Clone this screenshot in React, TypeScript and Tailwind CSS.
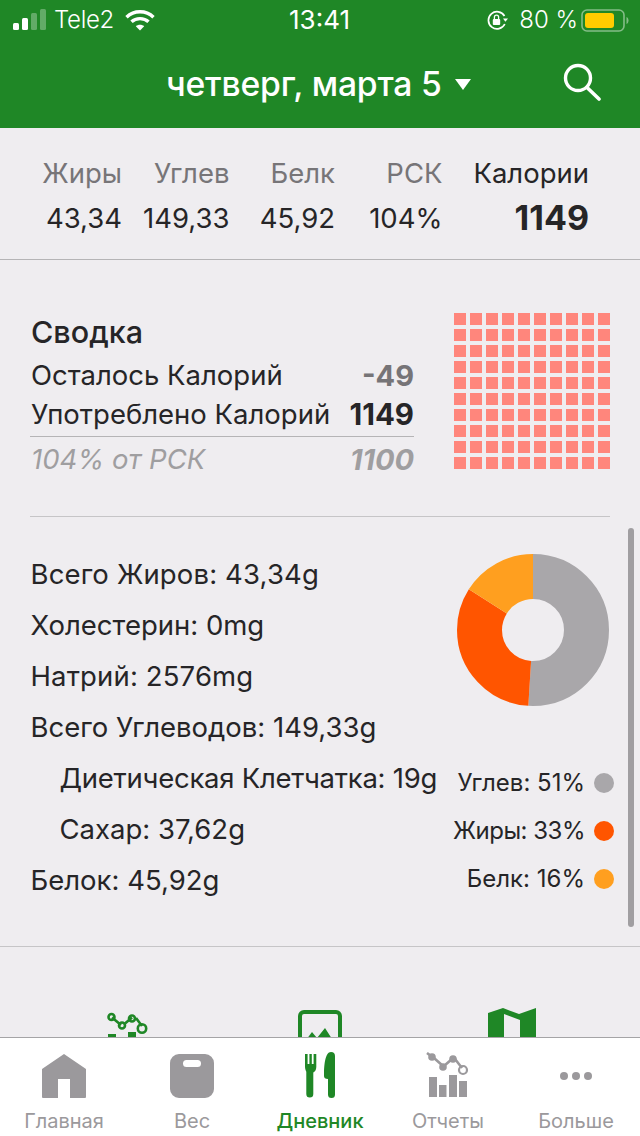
import React from "react";

const GREEN = "#1f8726";
const GRAY = "#9b999c";

// top macro summary columns
const macros = [
  { label: "Жиры", value: "43,34" },
  { label: "Углев", value: "149,33" },
  { label: "Белк", value: "45,92" },
  { label: "РСК", value: "104%" },
];

const nutrients = [
  { text: "Всего Жиров: 43,34g", cls: "tracking-[0.15px]" },
  { text: "Холестерин: 0mg", cls: "" },
  { text: "Натрий: 2576mg", cls: "tracking-[0.15px]" },
  { text: "Всего Углеводов: 149,33g", cls: "" },
  { text: "Диетическая Клетчатка: 19g", cls: "pl-[29px] tracking-[-0.25px]" },
  { text: "Сахар: 37,62g", cls: "pl-[29px]" },
  { text: "Белок: 45,92g", cls: "" },
];

const legend = [
  { text: "Углев: 51%", dot: "bg-[#a9a7aa]", cls: "" },
  { text: "Жиры: 33%", dot: "bg-[#ff5500]", cls: "tracking-[-0.5px]" },
  { text: "Белк: 16%", dot: "bg-[#ff9f1f]", cls: "" },
];

const StatusBar = () => (
  <div className="flex h-10 items-center text-white">
    <div className="flex flex-1 items-center pl-[13px]">
      <svg width="34" height="22" viewBox="0 0 34 22" fill="#fff">
        <rect x="0" y="14" width="6" height="7" rx="1.5" />
        <rect x="9" y="9" width="6" height="12" rx="1.5" />
        <rect x="18" y="4" width="6" height="17" rx="1.5" opacity="0.3" />
        <rect x="27" y="0" width="6" height="21" rx="1.5" opacity="0.3" />
      </svg>
      <span className="ml-[7px] text-[24px] font-light leading-none tracking-[-0.3px]">Tele2</span>
      <svg className="ml-[11px]" width="30" height="22" viewBox="0 0 30 22" fill="none" stroke="#fff" strokeWidth="3.4">
        <path d="M1.5 8.2C9 1 21 1 28.5 8.2" />
        <path d="M6.5 12.8C11 8.5 19 8.5 23.5 12.8" />
        <path d="M15 21.5L10.8 17.2C13 15.2 17 15.2 19.2 17.2Z" fill="#fff" stroke="none" />
      </svg>
    </div>
    <span className="mr-[3px] text-[26px] font-normal leading-none">13:41</span>
    <div className="flex flex-1 items-center justify-end pr-[11px]">
      <svg width="21" height="20" viewBox="0 0 21 20" fill="none" stroke="#fff" strokeWidth="1.7">
        <path d="M17.5 6A8.6 8.6 0 1 0 17.8 14" />
        <path d="M16 8.4h5l-2.6 3.4z" fill="#fff" stroke="none" />
        <rect x="5.8" y="9" width="7.4" height="6" rx="1" fill="#fff" stroke="none" />
        <path d="M7.4 9V7.2a2.1 2.1 0 0 1 4.2 0V9" strokeWidth="1.3" />
      </svg>
      <span className="ml-[11px] text-[24px] font-light leading-none">80 %</span>
      <svg className="ml-[3px]" width="48" height="23" viewBox="0 0 48 23" fill="none">
        <rect x="1" y="1" width="42" height="21" rx="5" stroke="#fff" strokeOpacity="0.45" strokeWidth="1.6" />
        <rect x="4" y="4" width="29" height="15" rx="3" fill="#ffcc00" />
        <path d="M45.5 8v7c1.3-.4 2-2 2-3.5s-.7-3.100-2-3.500z" fill="#fff" fillOpacity="0.45" />
      </svg>
    </div>
  </div>
);

const Header = () => (
  <div className="flex h-[88px] items-center">
    <span className="ml-[166px] text-[33.700px] font-medium leading-none tracking-[-0.2px] text-white">четверг, марта 5</span>
    <svg className="ml-[13px] mt-[1px]" width="16" height="11" viewBox="0 0 16 11" fill="#fff">
      <path d="M0 0h16l-8 11z" />
    </svg>
    <div className="flex-1" />
    <svg className="mb-[5px] mr-[39px]" width="38" height="38" viewBox="0 0 38 38" fill="none" stroke="#fff" strokeWidth="3.4" strokeLinecap="round">
      <circle cx="15" cy="15" r="12.500" />
      <path d="M24 24.500L36 36" strokeWidth="3.600" />
    </svg>
  </div>
);

const MacroRow = () => (
  <div className="grid h-[132px] grid-cols-[122px_107.500px_105.500px_107.500px_146.500px] border-b border-[#b5b4b6] pt-[26px] text-right">
    {macros.map((m) => (
      <div key={m.label}>
        <div className="h-[38px] text-[27.500px] leading-[38px] text-[#777578]">{m.label}</div>
        <div className="mt-[7px] h-[38px] text-[27.500px] leading-[38px] text-[#262527]">{m.value}</div>
      </div>
    ))}
    <div>
      <div className="h-[38px] text-[27.500px] leading-[38px] text-[#262527]">Калории</div>
      <div className="mt-[7px] h-[38px] text-[34px] font-bold leading-[38px] text-[#262527]">1149</div>
    </div>
  </div>
);

const Summary = () => (
  <div className="mx-[30px] flex h-[257px] items-start justify-between border-b border-[#c6c5c7] pt-[53px]">
    <div className="mt-[1px] w-[384px]">
      <div className="ml-[1px] text-[30.500px] font-medium leading-[36px] text-[#262527]">Сводка</div>
      <div className="mt-[6px] flex h-[39px] items-center justify-between text-[27.500px] text-[#262527]">
        <span className="ml-[1px]">Осталось Калорий</span>
        <span className="text-[29px] font-bold text-[#767477]">-49</span>
      </div>
      <div className="flex h-[39px] items-center justify-between text-[27.500px] text-[#262527]">
        <span className="ml-[1px]">Употреблено Калорий</span>
        <span className="text-[29.500px] font-bold">1149</span>
      </div>
      <div className="mt-[2px] flex h-[46px] items-center justify-between border-t border-[#b5b4b6] text-[27.500px] italic text-[#9f9ea0]">
        <span className="ml-[1px]">104% от РСК</span>
        <span className="text-[29px] font-bold">1100</span>
      </div>
    </div>
    <div className="grid grid-cols-10 gap-[4px]">
      {Array.from({ length: 100 }).map((_, i) => (
        <div key={i} className="h-[12px] w-[12px] bg-[#ff867c]" />
      ))}
    </div>
  </div>
);

const Donut = () => (
  <svg width="152" height="152" viewBox="0 0 152 152" fill="none">
    <g transform="rotate(-90 76 76)" strokeWidth="45">
      <circle cx="76" cy="76" r="53.500" pathLength="100" stroke="#a9a7aa" strokeDasharray="51 49" />
      <circle cx="76" cy="76" r="53.500" pathLength="100" stroke="#ff5500" strokeDasharray="33 67" strokeDashoffset="-51" />
      <circle cx="76" cy="76" r="53.500" pathLength="100" stroke="#ff9f1f" strokeDasharray="16 84" strokeDashoffset="-84" />
    </g>
  </svg>
);

const Nutrients = () => (
  <div className="flex h-[430px] justify-between border-b border-[#c6c5c7] pl-[30.500px] pr-[26px] pt-[32px]">
    <div>
      {nutrients.map((n) => (
        <div key={n.text} className={`h-[51px] whitespace-nowrap text-[27.500px] leading-[51px] text-[#262527] ${n.cls}`}>
          {n.text}
        </div>
      ))}
    </div>
    <div className="flex flex-col items-end pt-[5px]">
      <div className="mr-[5.500px]">
        <Donut />
      </div>
      <div className="mt-[62px] flex flex-col gap-[18px]">
        {legend.map((l) => (
          <div key={l.text} className="flex h-[30px] items-center justify-end text-[24px] text-[#262527]">
            <span className={l.cls}>{l.text}</span>
            <span className={`ml-[9px] h-[20px] w-[20px] rounded-full ${l.dot}`} />
          </div>
        ))}
      </div>
    </div>
  </div>
);

const ReportActions = () => (
  <div className="grid grid-cols-3 px-[32px] pt-[60px]">
    <div className="flex justify-center">
      <svg width="44" height="60" viewBox="0 0 44 60" fill="none" stroke={GREEN} strokeWidth="2.600">
        <path d="M6 10.500l9 7.500M19 16.500l7-6M30 11l6 8" />
        <circle cx="5.500" cy="10" r="3" />
        <circle cx="16" cy="18.500" r="3" />
        <circle cx="26" cy="11.500" r="3" />
        <circle cx="36" cy="21.500" r="4.200" />
        <path d="M2 27h8v20H2zM22 25h8v22h-8z" fill={GREEN} stroke="none" />
      </svg>
    </div>
    <div className="flex justify-center pt-[3px]">
      <svg width="44" height="60" viewBox="0 0 44 60" fill="none">
        <rect x="2" y="2" width="40" height="50" rx="4" stroke={GREEN} strokeWidth="4" />
        <path d="M8 30l6-8 5 6 8-10 9 14z" fill={GREEN} />
      </svg>
    </div>
    <div className="flex justify-center pt-[1px]">
      <svg width="48" height="60" viewBox="0 0 48 60" fill={GREEN}>
        <path fillRule="evenodd" d="M0 5L15 0l16 6 17-6v60H0zM16 6v54h16V12z" />
      </svg>
    </div>
  </div>
);

const HomeIcon = () => (
  <svg width="44" height="44" viewBox="0 0 44 44" fill={GRAY}>
    <path fillRule="evenodd" d="M22 0L44 15v28a1 1 0 0 1-1 1H28V25H16v19H1a1 1 0 0 1-1-1V15z" />
  </svg>
);

const ScaleIcon = () => (
  <svg width="44" height="44" viewBox="0 0 44 44" fill={GRAY}>
    <path fillRule="evenodd" d="M9 0h26a9 9 0 0 1 9 9v26a9 9 0 0 1-9 9H9a9 9 0 0 1-9-9V9a9 9 0 0 1 9-9zM16.500 6a3.500 3.500 0 0 0 0 7h11a3.500 3.500 0 0 0 0-7z" />
  </svg>
);

const DiaryIcon = () => (
  <svg width="32" height="46" viewBox="0 0 32 46" fill={GREEN}>
    <path d="M1 2h2.600v10h1.800V2h2.400v10h1.800V2h2.700v13c0 3-1.600 5-3 5.500V42a3.500 3.500 0 0 1-7 0V20.500C2.800 20 1 18 1 15z" />
    <path d="M27 0c2.700 0 4 1.500 4 4v38.500a3.500 3.500 0 0 1-7 0V27c-2.700 0-4-1-4-3 0-10 1-24 7-24z" />
  </svg>
);

const ReportsIcon = () => (
  <svg width="44" height="46" viewBox="0 0 44 46" fill="none">
    <path d="M1 1l4 3M8 6l9 8M18 14l8-7M29 7l7 9" stroke={GRAY} strokeWidth="2.600" />
    <circle cx="6" cy="5" r="3.800" fill={GRAY} />
    <circle cx="17" cy="15" r="3.800" fill={GRAY} />
    <circle cx="27" cy="7" r="3.800" fill={GRAY} />
    <circle cx="37" cy="18" r="4" stroke={GRAY} strokeWidth="2.200" />
    <path d="M3 25h8v20H3zM13 33h7.500v12H13zM23 23h8v22h-8zM33 29h8v16h-8z" fill={GRAY} />
  </svg>
);

const MoreIcon = () => (
  <svg width="36" height="44" viewBox="0 0 36 44" fill={GRAY}>
    <circle cx="6" cy="22" r="4" />
    <circle cx="18" cy="22" r="4" />
    <circle cx="30" cy="22" r="4" />
  </svg>
);

const tabs = [
  { label: "Главная", icon: <HomeIcon />, active: false },
  { label: "Вес", icon: <ScaleIcon />, active: false },
  { label: "Дневник", icon: <DiaryIcon />, active: true },
  { label: "Отчеты", icon: <ReportsIcon />, active: false },
  { label: "Больше", icon: <MoreIcon />, active: false },
];

const TabBar = () => (
  <div className="grid h-[99px] grid-cols-5 border-t border-[#a5a4a6] bg-white">
    {tabs.map((t) => (
      <div key={t.label} className="flex flex-col items-center">
        <div className="flex h-[60px] items-end justify-center">{t.icon}</div>
        <span className={`mt-[12px] text-[20px] leading-[22px] ${t.active ? "font-medium text-[#1f8726]" : "text-[#9b999c]"}`}>
          {t.label}
        </span>
      </div>
    ))}
  </div>
);

export default function App() {
  return (
    <div className="flex h-[1136px] w-[640px] flex-col overflow-hidden bg-[#efedf0] font-['Inter',sans-serif]">
      <div className="bg-[#1f8726]">
        <StatusBar />
        <Header />
      </div>
      <div className="relative min-h-0 flex-1 overflow-hidden">
        <MacroRow />
        <Summary />
        <Nutrients />
        <ReportActions />
        {/* scroll indicator */}
        <div className="absolute left-[628px] top-[400px] h-[399px] w-[6px] rounded-full bg-[#a09ea1]" />
      </div>
      <TabBar />
    </div>
  );
}
